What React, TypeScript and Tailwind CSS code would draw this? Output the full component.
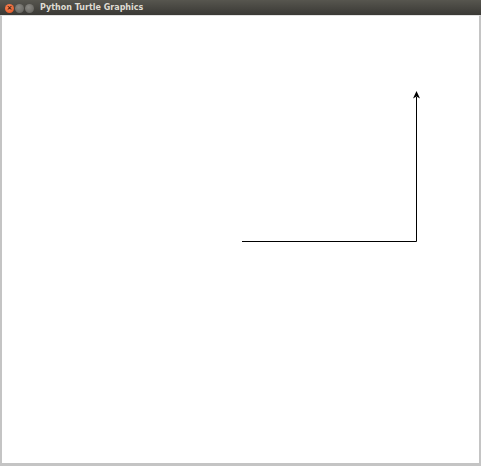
const TitleButton = ({ tone }: { tone: 'close' | 'idle' }) => (
    <span
        className={`flex h-[9px] w-[9px] items-center justify-center rounded-full ${
            tone === 'close'
                ? 'bg-[radial-gradient(circle_at_40%_35%,#f7865a,#e0501c)]'
                : 'bg-[radial-gradient(circle_at_40%_35%,#8a8984,#5d5c57)]'
        }`}
    >
        {tone === 'close' && <span className="text-[7px] leading-none font-bold text-[#3a1a0a]">×</span>}
    </span>
);

export default function App() {
    return (
        <div className="flex h-[466px] w-[481px] flex-col bg-[#cfcfcf] font-['DejaVu_Sans',sans-serif]">
            {/* Window title bar */}
            <div className="flex h-[15px] items-center gap-[1px] bg-gradient-to-b from-[#57564f] to-[#3a3935] pl-[5px] pt-[1px]">
                <TitleButton tone="close" />
                <TitleButton tone="idle" />
                <TitleButton tone="idle" />
                <span className="ml-[5px] text-[8px] leading-none font-bold text-[#dfdbd2]">Python Turtle Graphics</span>
            </div>

            {/* Turtle canvas */}
            <div className="flex flex-1 flex-col border-x-2 border-t border-b-[3px] border-x-[#c4c4c4] border-t-[#e2e2e2] border-b-[#c4c4c4] bg-white">
                <svg className="flex-1" width="477" height="447" viewBox="0 0 477 447">
                    <path d="M240 225.5H414.5V81" fill="none" stroke="#000" strokeWidth="1" />
                    <polygon points="414.5,75 411,82.5 414.5,80.5 418,82.5" fill="#000" />
                </svg>
            </div>
        </div>
    );
}
